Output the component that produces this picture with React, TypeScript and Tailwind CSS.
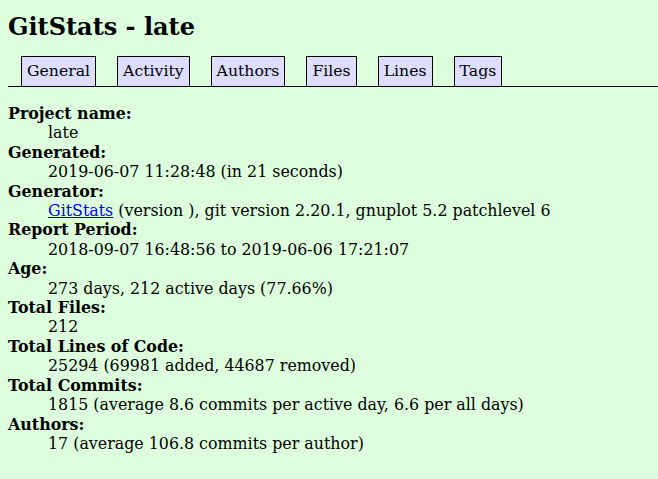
const tabs = ["General", "Activity", "Authors", "Files", "Lines", "Tags"]

const info: { label: string; value: React.ReactNode }[] = [
  { label: "Project name", value: "late" },
  { label: "Generated", value: "2019-06-07 11:28:48 (in 21 seconds)" },
  {
    label: "Generator",
    value: (
      <>
        <a href="#" className="text-[#0000ee] underline">GitStats</a> (version ), git version 2.20.1, gnuplot 5.2 patchlevel 6
      </>
    ),
  },
  { label: "Report Period", value: "2018-09-07 16:48:56 to 2019-06-06 17:21:07" },
  { label: "Age", value: "273 days, 212 active days (77.66%)" },
  { label: "Total Files", value: "212" },
  { label: "Total Lines of Code", value: "25294 (69981 added, 44687 removed)" },
  { label: "Total Commits", value: "1815 (average 8.6 commits per active day, 6.6 per all days)" },
  { label: "Authors", value: "17 (average 106.8 commits per author)" },
]

export default function App() {
  return (
    <div className="min-h-[479px] bg-[#ddffdd] p-2 text-black font-['DejaVu_Serif',serif] text-[15.85px]">
      <h1 className="text-[24px] font-bold leading-[28px] mt-[5px]">GitStats - late</h1>

      <div className="mt-[15px] flex items-end gap-[21px] border-b border-black pl-[13px] -mr-2 text-[15.7px]">
        {tabs.map((t) => (
          <div
            key={t}
            className="h-[30px] border-x border-t border-black bg-[#ddddff] px-[5px] pt-[4px] leading-[19px]"
          >
            {t}
          </div>
        ))}
      </div>

      <dl className="mt-[17px] leading-[19.4px]">
        {info.map((row) => (
          <div key={row.label}>
            <dt className="font-bold">{row.label}:</dt>
            <dd className="ml-10">{row.value}</dd>
          </div>
        ))}
      </dl>
    </div>
  )
}
